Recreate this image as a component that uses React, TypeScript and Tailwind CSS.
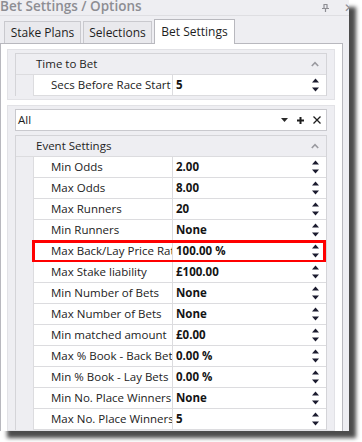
import React from 'react';

const rows = [
  { label: 'Min Odds', value: '2.00' },
  { label: 'Max Odds', value: '8.00' },
  { label: 'Max Runners', value: '20' },
  { label: 'Min Runners', value: 'None' },
  { label: 'Max Back/Lay Price Ratio', value: '100.00 %', marked: true },
  { label: 'Max Stake liability', value: '£100.00' },
  { label: 'Min Number of Bets', value: 'None' },
  { label: 'Max Number of Bets', value: 'None' },
  { label: 'Min matched amount', value: '£0.00' },
  { label: 'Max % Book - Back Bets', value: '0.00 %' },
  { label: 'Min % Book - Lay Bets', value: '0.00 %' },
  { label: 'Min No. Place Winners', value: 'None' },
  { label: 'Max No. Place Winners', value: '5' },
];

const Spin = () => (
  <svg width="7" height="14" viewBox="0 0 7 14" className="shrink-0">
    <polygon points="0,4.5 3.5,0.5 7,4.5" fill="#1b1b2e" />
    <polygon points="0,9.5 3.5,13.5 7,9.5" fill="#1b1b2e" />
  </svg>
);

const Chevron = () => (
  <svg width="8" height="6" viewBox="0 0 8 6" className="shrink-0">
    <path d="M0.8 5 L4 1.6 L7.2 5" fill="none" stroke="#9a9aa0" strokeWidth="1.6" />
  </svg>
);

const Category = ({ title }: { title: string }) => (
  <div className="h-[21px] flex items-center justify-between pl-[20px] pr-[7px] bg-[#eeeef2] border-b border-[#dcdcdf] text-[#1e1e1e]">
    <span>{title}</span>
    <Chevron />
  </div>
);

const Row = ({ label, value, marked }: { label: string; value: string; marked?: boolean }) => (
  <div className="relative h-[21px] flex">
    <div className="w-[17px] shrink-0 bg-[#eeeef2]" />
    <div className="flex-1 flex border-b border-l border-[#dcdcdf] bg-white">
      <div className="w-[139px] shrink-0 pl-[17px] overflow-hidden whitespace-nowrap border-r border-[#dcdcdf] text-[#222222] leading-[20px]">
        {label}
      </div>
      <div className="flex-1 flex items-center justify-between pl-[3px] pr-[7px] font-bold text-[#141414]">
        <span className="leading-[20px]">{value}</span>
        <Spin />
      </div>
    </div>
    {marked && (
      <div className="absolute left-[16px] right-0 -top-[1px] h-[23px] border-[3px] border-[#ff0000] pointer-events-none" />
    )}
  </div>
);

export default function App() {
  return (
    <div className="w-[362px] h-[442px] bg-white overflow-hidden font-['Open_Sans',sans-serif] text-[11.5px]">
      <div className="relative w-[349px] h-[431px] bg-[#eeeef2] shadow-[7px_7px_4px_rgba(0,0,0,0.7)] flex flex-col overflow-hidden">
        {/* title */}
        <div className="h-[16px] shrink-0 flex items-center justify-between border-b border-[#dedee2]">
          <span className="text-[13.5px] font-semibold text-[#8d8d93] leading-none -mt-[2px]">Bet Settings / Options</span>
          <div className="flex items-center gap-[15px] -mr-[5px]">
            <svg width="7" height="8" viewBox="0 0 7 8">
              <path d="M1.5 0.5 H5.5 M2 0.5 V4.5 M5 0.5 V4.5 M0 4.5 H7 M3.5 4.5 V8" stroke="#8d8d93" strokeWidth="1.2" fill="none" />
            </svg>
            <span className="text-[12px] text-[#8d8d93] leading-none">✕</span>
          </div>
        </div>

        {/* tabs */}
        <div className="h-[27px] shrink-0 flex items-end pl-[4px] gap-[2px]">
          <div className="h-[22px] w-[77px] flex items-center justify-center border border-b-0 border-[#c9c9ce] bg-[#e9e9ed] text-[#1e1e1e] text-[12px]">
            Stake Plans
          </div>
          <div className="h-[22px] w-[69px] flex items-center justify-center border border-b-0 border-[#c9c9ce] bg-[#e9e9ed] text-[#1e1e1e] text-[12px]">
            Selections
          </div>
          <div className="relative h-[25px] w-[81px] -mb-[1px] flex items-center justify-center border border-b-0 border-[#b8b8be] bg-white text-[#1e1e1e] text-[12px] z-10">
            Bet Settings
          </div>
        </div>

        {/* content */}
        <div className="flex-1 mr-[6px] mb-[2px] border border-[#b8b8be] bg-white flex flex-col pt-[5px] pl-[6px] pr-[7px] gap-[5px]">
          <div className="bg-[#eeeef2] border border-[#e2e2e6] px-[7px] py-[3px]">
            <div className="border border-[#d4d4d8] border-b-0">
              <Category title="Time to Bet" />
              <Row label="Secs Before Race Start" value="5" />
            </div>
          </div>

          <div className="flex-1 bg-[#eeeef2] border border-[#e2e2e6] px-[7px] pt-[3px] flex flex-col gap-[4px]">
            <div className="h-[22px] flex items-center bg-white border border-[#c9c9ce] pl-[2px] pr-[5px] text-[#1e1e1e]">
              <span className="flex-1">All</span>
              <div className="flex items-center gap-[9px]">
                <svg width="7" height="4" viewBox="0 0 7 4">
                  <polygon points="0,0 7,0 3.5,4" fill="#2a2a2a" />
                </svg>
                <svg width="7" height="7" viewBox="0 0 7 7">
                  <path d="M3.5 0 V7 M0 3.5 H7" stroke="#1e1e1e" strokeWidth="2" />
                </svg>
                <svg width="8" height="8" viewBox="0 0 8 8">
                  <path d="M0.5 0.5 L7.5 7.5 M7.5 0.5 L0.5 7.5" stroke="#1e1e1e" strokeWidth="1.3" />
                </svg>
              </div>
            </div>
            <div className="border border-[#d4d4d8] border-b-0">
              <Category title="Event Settings" />
              {rows.map((r) => (
                <Row key={r.label} label={r.label} value={r.value} marked={r.marked} />
              ))}
            </div>
          </div>
        </div>
      </div>
    </div>
  );
}
